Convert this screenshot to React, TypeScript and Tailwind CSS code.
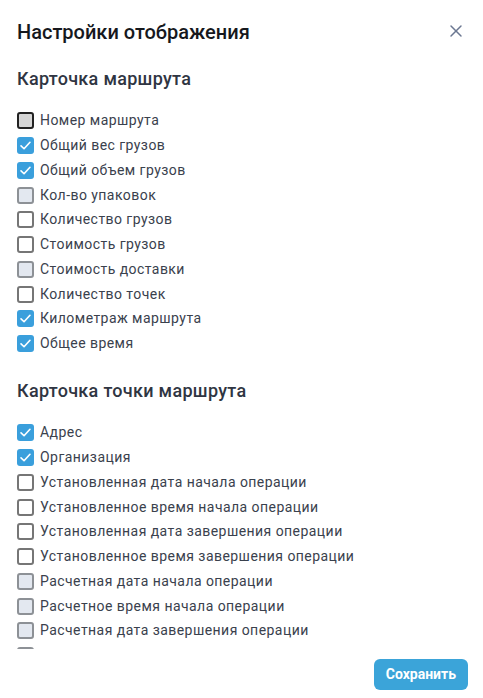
import { X } from 'lucide-react';

type State = 'checked' | 'empty' | 'disabled' | 'focused';

interface Item {
  label: string;
  state: State;
}

const routeCard: Item[] = [
  { label: 'Номер маршрута', state: 'focused' },
  { label: 'Общий вес грузов', state: 'checked' },
  { label: 'Общий объем грузов', state: 'checked' },
  { label: 'Кол-во упаковок', state: 'disabled' },
  { label: 'Количество грузов', state: 'empty' },
  { label: 'Стоимость грузов', state: 'empty' },
  { label: 'Стоимость доставки', state: 'disabled' },
  { label: 'Количество точек', state: 'empty' },
  { label: 'Километраж маршрута', state: 'checked' },
  { label: 'Общее время', state: 'checked' },
];

const pointCard: Item[] = [
  { label: 'Адрес', state: 'checked' },
  { label: 'Организация', state: 'checked' },
  { label: 'Установленная дата начала операции', state: 'empty' },
  { label: 'Установленное время начала операции', state: 'empty' },
  { label: 'Установленная дата завершения операции', state: 'empty' },
  { label: 'Установленное время завершения операции', state: 'empty' },
  { label: 'Расчетная дата начала операции', state: 'disabled' },
  { label: 'Расчетное время начала операции', state: 'disabled' },
  { label: 'Расчетная дата завершения операции', state: 'disabled' },
  { label: 'Расчетное время завершения операции', state: 'disabled' },
  { label: 'Контактное лицо', state: 'empty' },
];

function Box({ state }: { state: State }) {
  if (state === 'checked') {
    return (
      <span className="w-[17px] h-[17px] rounded-[3px] bg-[#3a9fdc] flex items-center justify-center shrink-0">
        <svg width="13" height="13" viewBox="0 0 16 16" fill="none">
          <path d="M2.5 8.5 L6.2 12 L13.5 4" stroke="white" strokeWidth="2" strokeLinecap="round" strokeLinejoin="round" />
        </svg>
      </span>
    );
  }

  if (state === 'focused') {
    return <span className="w-[17px] h-[17px] rounded-[3px] bg-[#d6d6d6] border-2 border-[#222222] shrink-0" />;
  }

  if (state === 'disabled') {
    return <span className="w-[17px] h-[17px] rounded-[3px] bg-[#e3e8f0] border-2 border-[#8d9196] shrink-0" />;
  }

  return <span className="w-[17px] h-[17px] rounded-[3px] bg-white border-2 border-[#767676] shrink-0" />;
}

function Section({ title, items }: { title: string; items: Item[] }) {
  return (
    <div className="pt-[19px]">

      <h3 className="h-[30px] flex items-center text-[18px] tracking-[0.3px] font-medium text-[#2f3542]">
        {title}
      </h3>

      <div className="mt-[15.5px]">
        {items.map((item) => (
          <label key={item.label} className="h-[24.75px] flex items-center gap-[6px]">
            <Box state={item.state} />
            <span className="text-[14px] tracking-[0.45px] text-[#3a414d] whitespace-nowrap">
              {item.label}
            </span>
          </label>
        ))}
      </div>

    </div>
  );
}

export default function App() {
  return (
    <div
      className="h-[698px] w-full bg-white flex flex-col overflow-hidden"
      style={{ fontFamily: 'Roboto, "Noto Sans", sans-serif' }}
    >

      {/* HEADER */}
      <div className="h-[44px] pl-[17px] pr-[17px] flex items-end justify-between">
        <h2 className="text-[20px] font-medium text-[#16181d] leading-[26px] -mb-[1px]">
          Настройки отображения
        </h2>
        <button className="text-[#6b7791] mb-[3px]">
          <X className="w-[20px] h-[20px]" strokeWidth={1.75} />
        </button>
      </div>

      {/* BODY */}
      <div className="flex-1 overflow-hidden px-[17px]">
        <Section title="Карточка маршрута" items={routeCard} />
        <Section title="Карточка точки маршрута" items={pointCard} />
      </div>

      {/* FOOTER */}
      <div className="h-[49px] shrink-0 flex items-start justify-end pt-[10px] pr-[15px]">
        <button className="h-[31px] px-[12px] rounded-[6px] bg-[#3ba4d9] text-white text-[14px] font-bold">
          Сохранить
        </button>
      </div>

    </div>
  );
}
